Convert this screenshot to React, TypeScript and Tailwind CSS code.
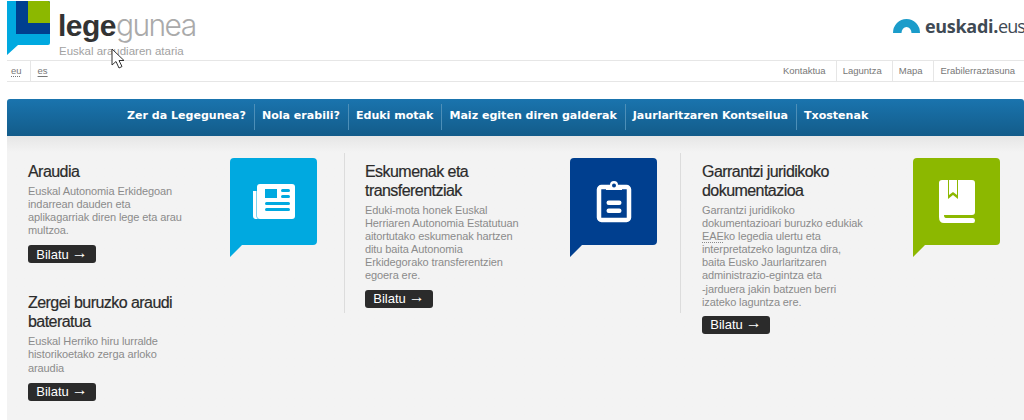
import React from 'react';

const sans = "font-['Liberation_Sans',Arial,sans-serif]";

const navItems = [
  'Zer da Legegunea?',
  'Nola erabili?',
  'Eduki motak',
  'Maiz egiten diren galderak',
  'Jaurlaritzaren Kontseilua',
  'Txostenak',
];

const utilLinks = ['Kontaktua', 'Laguntza', 'Mapa', 'Erabilerraztasuna'];

function Logo() {
  return (
    <svg width="44" height="54" viewBox="0 0 44 54" className="shrink-0">
      <path d="M0 0H41Q43 0 43 2V42Q43 44 41 44H11L0 54Z" fill="#00a9e0" />
      <path d="M9 0H41Q43 0 43 2V33H9Z" fill="#003f8f" />
      <path d="M21 0H41Q43 0 43 2V22H21Z" fill="#8cb800" />
    </svg>
  );
}

function Bubble({ color, children }: { color: string; children: React.ReactNode }) {
  return (
    <svg width="87" height="99" viewBox="0 0 87 99" className="shrink-0">
      <path
        d="M4 0H83Q87 0 87 4V83Q87 87 83 87H12L0 99V4Q0 0 4 0Z"
        fill={color}
      />
      {children}
    </svg>
  );
}

function NewsIcon() {
  return (
    <g>
      <path d="M23 33H26.5V58Q26.5 61 29 61H26Q23 61 23 58Z" fill="#fff" />
      <rect x="27" y="26" width="38" height="35" rx="3" fill="#fff" />
      <rect x="35" y="31" width="12" height="9" fill="#00a9e0" />
      <rect x="51" y="31" width="9" height="3" rx="1.5" fill="#00a9e0" />
      <rect x="51" y="37" width="9" height="3" rx="1.5" fill="#00a9e0" />
      <rect x="35" y="44" width="25" height="3" rx="1.5" fill="#00a9e0" />
      <rect x="35" y="50" width="25" height="3" rx="1.5" fill="#00a9e0" />
    </g>
  );
}

function ClipboardIcon() {
  return (
    <g>
      <rect x="29" y="29" width="30" height="33" rx="2.5" fill="none" stroke="#fff" strokeWidth="4.5" />
      <path d="M36 32V27H40Q40 23 44 23Q48 23 48 27H52V32Z" fill="#fff" />
      <circle cx="44" cy="27.5" r="2" fill="#003f8f" />
      <rect x="36.5" y="42.5" width="15" height="4.5" rx="2.2" fill="#fff" />
      <rect x="36.5" y="50.5" width="15" height="4.5" rx="2.2" fill="#fff" />
    </g>
  );
}

function BookIcon() {
  return (
    <g>
      <path d="M29 22H59Q62 22 62 25V54Q62 57 59 57H31Q31 60 33 60H60Q62 60 62 62.5Q62 65 60 65H31Q26 65 26 59V25Q26 22 29 22Z" fill="#fff" />
      <path d="M35 22H45V41L40 37L35 41Z" fill="#8cb800" />
      <path d="M36 22H44V37L40 34L36 37Z" fill="#fff" />
    </g>
  );
}

function BilatuButton() {
  return (
    <a className="flex h-[18px] w-[68px] items-center justify-center gap-[3px] rounded-[3px] bg-[#2b2b2b] text-[13px] leading-none text-white">
      <span>Bilatu</span>
      <span className="-mt-[3px] text-[16px]">→</span>
    </a>
  );
}

function Entry({
  title,
  children,
  className = '',
}: {
  title: React.ReactNode;
  children: React.ReactNode;
  className?: string;
}) {
  return (
    <div className={className}>
      <h2 className="text-[16px] leading-[19px] tracking-[-0.55px] text-[#2b2b2b] [-webkit-text-stroke:0.2px_#2b2b2b]">
        {title}
      </h2>
      <p className="mt-[4px] text-[11px] leading-[13.1px] tracking-[-0.1px] text-[#8b8b8b]">{children}</p>
    </div>
  );
}

export default function App() {
  return (
    <div className={`${sans} relative h-[420px] w-[1024px] overflow-hidden bg-white`}>
      {/* Header */}
      <header className="flex h-[60px] items-start justify-between pl-[7px]">
        <div className="flex items-start gap-[8px] pt-px">
          <Logo />
          <div className="pt-[8px]">
            <div className="-ml-[1px] flex text-[30px] leading-[33px]">
              <span className="font-bold tracking-[-0.5px] text-[#333]">lege</span>
              <span className="font-['Inter',sans-serif] font-light tracking-[-1.6px] text-[#aaa]">gunea</span>
            </div>
            <div className="mt-[2px] text-[11.5px] leading-[14px] text-[#a2a2a2]">
              Euskal araudiaren ataria
            </div>
          </div>
        </div>
        <div className="flex w-[131px] shrink-0 items-center gap-[5px] pt-[16px]">
          <svg width="27" height="14" viewBox="0 0 27 14" className="shrink-0">
            <path d="M0 14A13.5 14 0 0 1 27 14H18.5A5 6 0 0 0 8.5 14Z" fill="#1b9cca" />
          </svg>
          <div className="font-['Open_Sans',sans-serif] whitespace-nowrap text-[18px] leading-[20px] tracking-[-0.3px] text-[#3f4a54]">
            <span className="font-bold">euskadi.</span>
            <span className="tracking-[-1px]">eus</span>
          </div>
        </div>
      </header>

      {/* Utility row */}
      <div className="ml-[7px] flex h-[22px] items-center justify-between border-y border-[#e6e6e6] text-[9.5px] text-[#777]">
        <div className="flex h-full items-center">
          <span className="pl-[4px] underline decoration-dotted underline-offset-2">eu</span>
          <span className="ml-[8px] flex h-full items-center border-l border-[#e6e6e6] pl-[7px] underline underline-offset-2">es</span>
        </div>
        <div className="flex h-full items-center pr-[9px]">
          {utilLinks.map((link, i) => (
            <span
              key={link}
              className={`flex h-full items-center ${i > 0 ? 'border-l border-[#e6e6e6]' : ''} ${
                i === utilLinks.length - 1 ? 'pl-[7px]' : 'pl-[6px] pr-[10px]'
              }`}
            >
              {link}
            </span>
          ))}
        </div>
      </div>

      {/* Nav band */}
      <nav className="ml-[7px] mt-[17px] flex h-[37px] items-center rounded-t-[3px] bg-gradient-to-b from-[#1a74ae] to-[#135c8a] pb-[2px] pl-[120px] font-['DejaVu_Sans',sans-serif] text-[11.05px] font-bold text-white">
        {navItems.map((item, i) => (
          <span
            key={item}
            className={`flex h-[26px] items-center whitespace-nowrap ${
              i > 0 ? 'ml-[8px] border-l border-[#4d8fb8] pl-[7px]' : ''
            }`}
          >
            {item}
          </span>
        ))}
      </nav>

      {/* Content */}
      <main className="ml-[7px] flex h-[284px] items-start bg-[#f3f3f3] bg-gradient-to-b from-[#e6e6e6] to-[#f3f3f3] to-[16px] pt-[22px]">
        <section className="flex w-[337px] shrink-0 items-start pl-[21px]">
          <div className="mt-[4px] w-[160px] shrink-0">
            <Entry title="Araudia">
              Euskal Autonomia Erkidegoan indarrean dauden eta aplikagarriak diren lege eta arau multzoa.
            </Entry>
            <div className="mt-[8px]">
              <BilatuButton />
            </div>
            <Entry title="Zergei buruzko araudi bateratua" className="mt-[30px]">
              Euskal Herriko hiru lurralde historikoetako zerga arloko araudia
            </Entry>
            <div className="mt-[8px]">
              <BilatuButton />
            </div>
          </div>
          <div className="ml-[42px]">
            <Bubble color="#00a9e0">
              <NewsIcon />
            </Bubble>
          </div>
        </section>

        <section className="flex w-[336px] shrink-0 items-start">
          <div className="-mt-[5px] h-[160px] w-px shrink-0 bg-[#dcdcdc]" />
          <div className="ml-[20px] mt-[4px] w-[160px] shrink-0">
            <Entry title="Eskumenak eta transferentziak">
              Eduki-mota honek Euskal Herriaren Autonomia Estatutuan aitortutako eskumenak hartzen ditu baita Autonomia Erkidegorako transferentzien egoera ere.
            </Entry>
            <div className="mt-[7px]">
              <BilatuButton />
            </div>
          </div>
          <div className="ml-[45px]">
            <Bubble color="#003f8f">
              <ClipboardIcon />
            </Bubble>
          </div>
        </section>

        <section className="flex items-start">
          <div className="-mt-[5px] h-[160px] w-px shrink-0 bg-[#dcdcdc]" />
          <div className="ml-[21px] mt-[4px] w-[170px] shrink-0">
            <Entry title="Garrantzi juridikoko dokumentazioa">
              Garrantzi juridikoko
              <br />
              dokumentazioari buruzko edukiak
              <br />
              <span className="underline decoration-dotted underline-offset-2">EAE</span>ko legedia ulertu eta
              <br />
              interpretatzeko laguntza dira,
              <br />
              baita Eusko Jaurlaritzaren
              <br />
              administrazio-egintza eta
              <br />
              -jarduera jakin batzuen berri
              <br />
              izateko laguntza ere.
            </Entry>
            <div className="mt-[7px]">
              <BilatuButton />
            </div>
          </div>
          <div className="ml-[41px]">
            <Bubble color="#8cb800">
              <BookIcon />
            </Bubble>
          </div>
        </section>
      </main>

      {/* Mouse pointer caught in the capture */}
      <svg width="16" height="22" viewBox="0 0 16 22" className="absolute left-[111px] top-[48px]">
        <path d="M1 1V17L5 13.5L8 20L11 18.5L8 12.5H13Z" fill="#fff" stroke="#333" strokeWidth="1" />
      </svg>
    </div>
  );
}
